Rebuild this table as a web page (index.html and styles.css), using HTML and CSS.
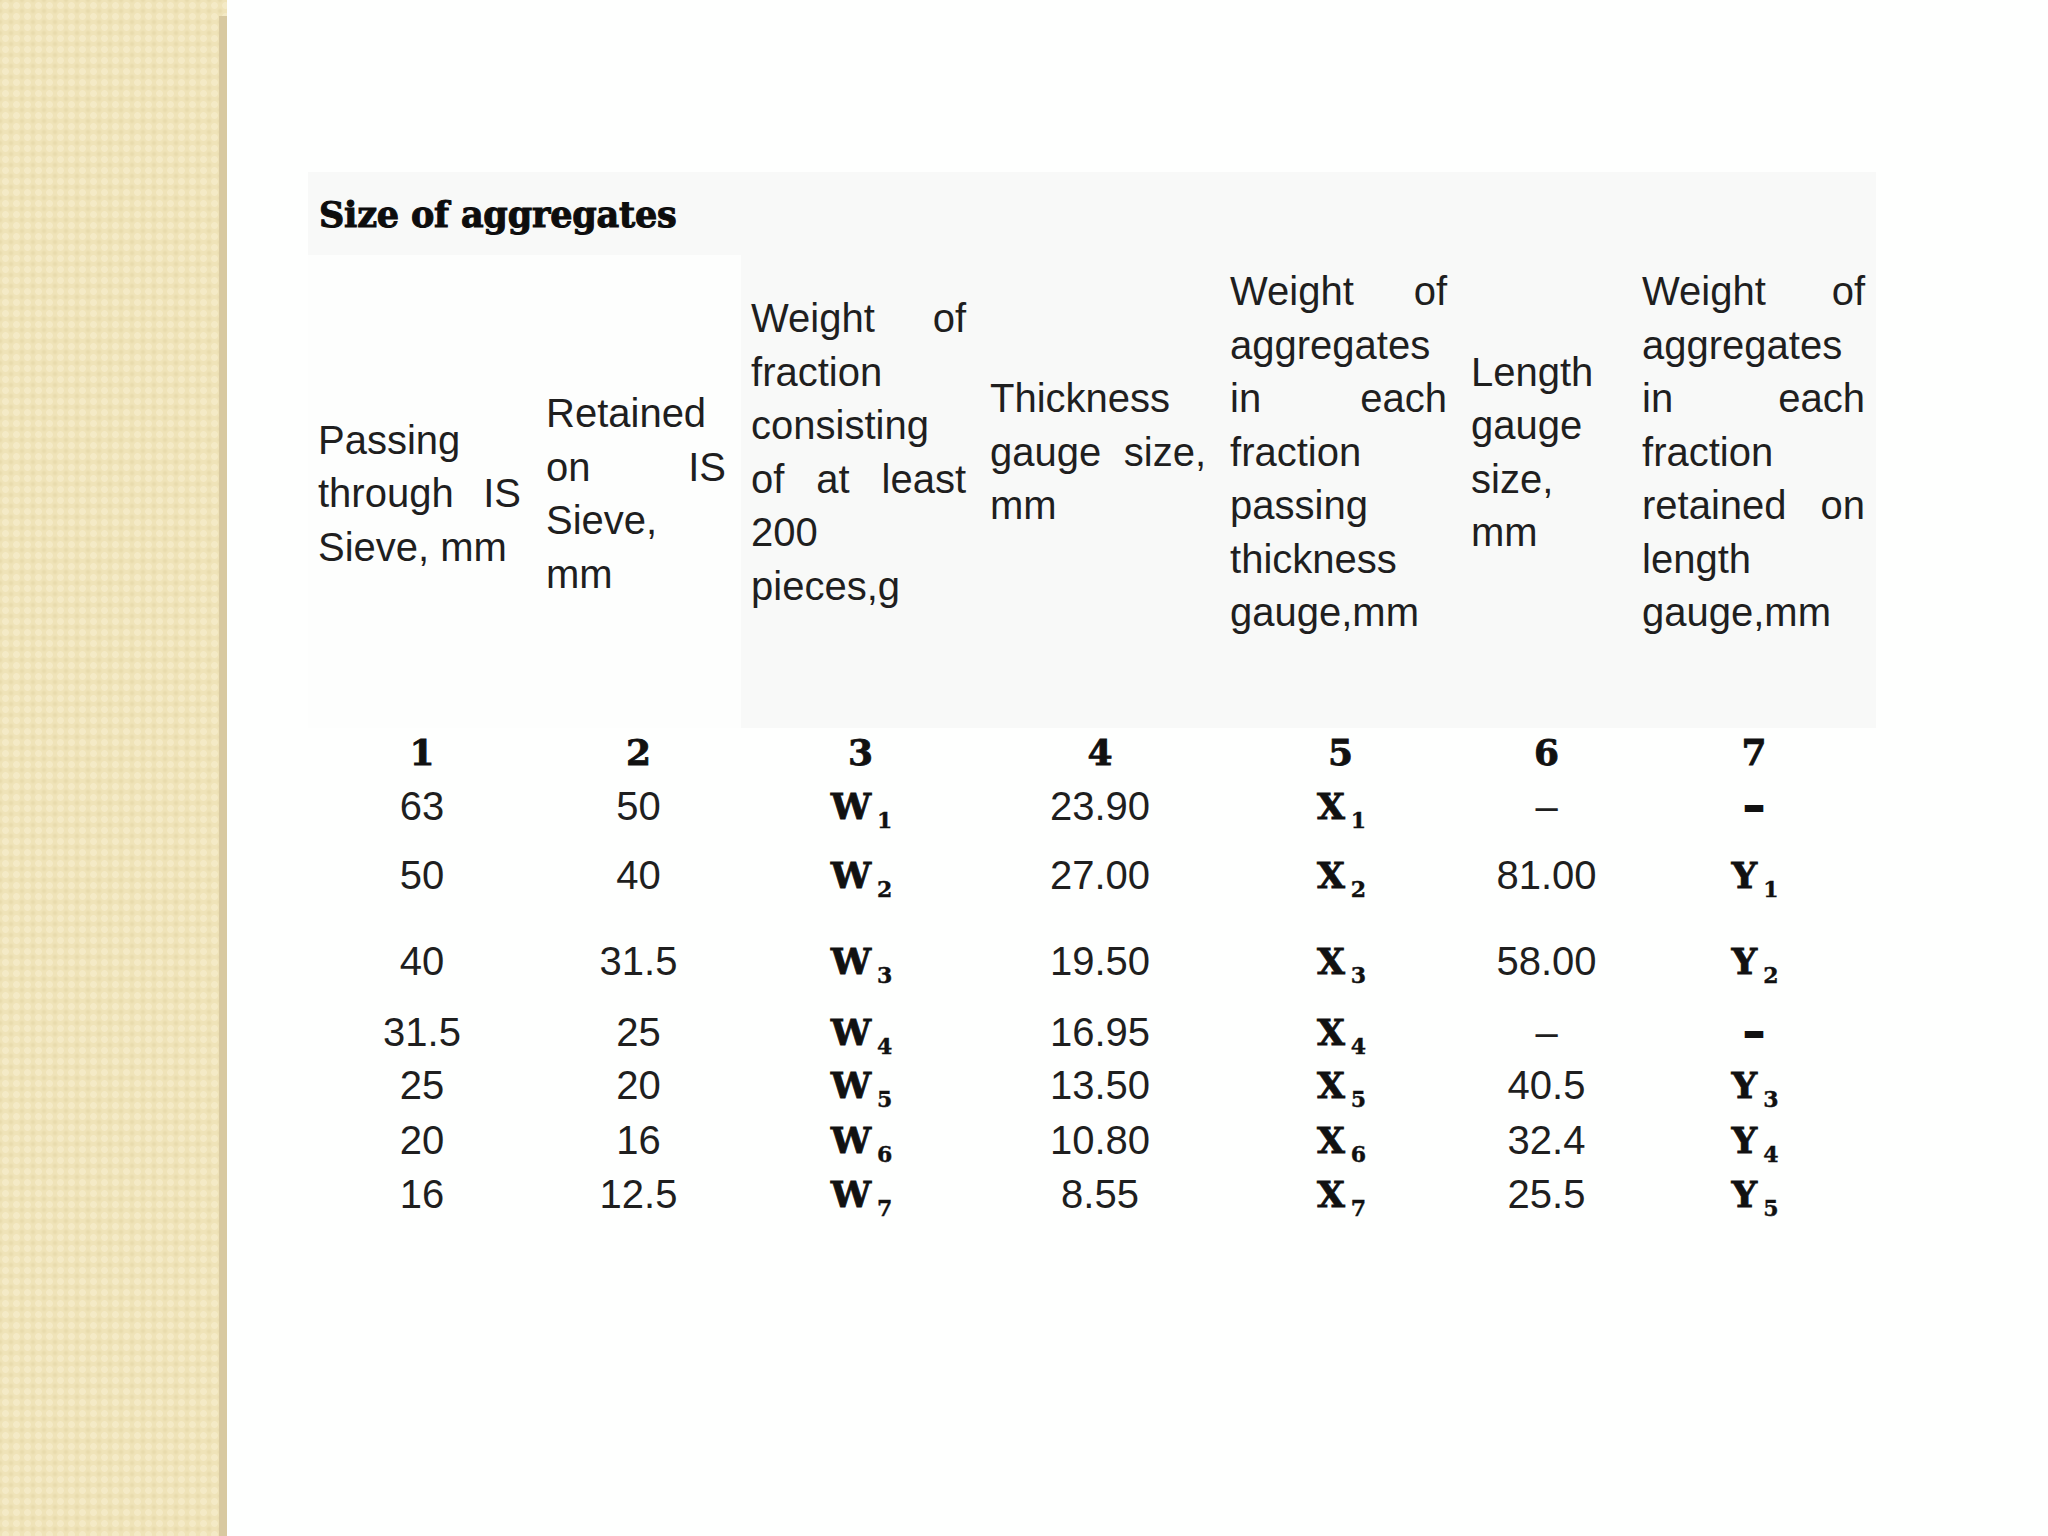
FILE: index.html
```html
<!DOCTYPE html>
<html lang="en">
<head>
<meta charset="utf-8">
<title>Size of aggregates</title>
<link rel="stylesheet" href="styles.css">
</head>
<body>
<div class="page">
  <div class="strip"><div class="edge"></div></div>
  <main class="content">
    <table class="agg">
      <colgroup>
        <col class="c1"><col class="c2"><col class="c3"><col class="c4"><col class="c5"><col class="c6"><col class="c7">
      </colgroup>
      <tr class="title-row">
        <td colspan="2" class="title">Size of aggregates</td>
        <th rowspan="2" class="hd">Weight of fraction consisting of at least 200 pieces,g</th>
        <th rowspan="2" class="hd">Thickness gauge size, mm</th>
        <th rowspan="2" class="hd">Weight of aggregates in each fraction passing thickness gauge,mm</th>
        <th rowspan="2" class="hd">Length gauge size, mm</th>
        <th rowspan="2" class="hd last">Weight of aggregates in each fraction retained on length gauge,mm</th>
      </tr>
      <tr class="head-row">
        <th class="hd plain">Passing through IS Sieve, mm</th>
        <th class="hd plain">Retained on IS Sieve, mm</th>
      </tr>
      <tr class="r1 nums">
        <td>1</td><td>2</td><td>3</td><td>4</td><td>5</td><td>6</td><td>7</td>
      </tr>
      <tr class="r2">
        <td>63</td><td>50</td><td class="sym">W<sub>1</sub></td><td>23.90</td><td class="sym">X<sub>1</sub></td><td>–</td><td class="sym dash">–</td>
      </tr>
      <tr class="r3">
        <td>50</td><td>40</td><td class="sym">W<sub>2</sub></td><td>27.00</td><td class="sym">X<sub>2</sub></td><td>81.00</td><td class="sym">Y<sub>1</sub></td>
      </tr>
      <tr class="r4">
        <td>40</td><td>31.5</td><td class="sym">W<sub>3</sub></td><td>19.50</td><td class="sym">X<sub>3</sub></td><td>58.00</td><td class="sym">Y<sub>2</sub></td>
      </tr>
      <tr class="r5">
        <td>31.5</td><td>25</td><td class="sym">W<sub>4</sub></td><td>16.95</td><td class="sym">X<sub>4</sub></td><td>–</td><td class="sym dash">–</td>
      </tr>
      <tr class="r6">
        <td>25</td><td>20</td><td class="sym">W<sub>5</sub></td><td>13.50</td><td class="sym">X<sub>5</sub></td><td>40.5</td><td class="sym">Y<sub>3</sub></td>
      </tr>
      <tr class="r7">
        <td>20</td><td>16</td><td class="sym">W<sub>6</sub></td><td>10.80</td><td class="sym">X<sub>6</sub></td><td>32.4</td><td class="sym">Y<sub>4</sub></td>
      </tr>
      <tr class="r8">
        <td>16</td><td>12.5</td><td class="sym">W<sub>7</sub></td><td>8.55</td><td class="sym">X<sub>7</sub></td><td>25.5</td><td class="sym">Y<sub>5</sub></td>
      </tr>
    </table>
  </main>
</div>
</body>
</html>
```

FILE: styles.css
```css
html, body {
  margin: 0;
  padding: 0;
  background: #fefffe;
}

body {
  font-family: "Liberation Sans", Arial, sans-serif;
  color: #1f1f1f;
}

.page {
  display: flex;
  width: 2048px;
  height: 1536px;
  overflow: hidden;
}

.strip {
  width: 227px;
  flex: none;
  display: flex;
  justify-content: flex-end;
  background-color: #efe3b8;
  background-image:
    radial-gradient(circle, #f4eac6 0 3px, rgba(244, 234, 198, 0) 3.8px),
    radial-gradient(circle, #e8dbad 0 1.8px, rgba(232, 219, 173, 0) 2.6px);
  background-size: 11px 11px, 11px 11px;
  background-position: 0 0, 5.5px 5.5px;
}

.edge {
  width: 8px;
  margin-top: 16px;
  background: #d8c9a0;
}

.content {
  flex: 1;
  padding: 172px 0 0 81px;
}

.agg {
  border-collapse: collapse;
  border-spacing: 0;
  table-layout: fixed;
  width: 1568px;
}

.c1 { width: 228px; }
.c2 { width: 205px; }
.c3 { width: 239px; }
.c4 { width: 240px; }
.c5 { width: 241px; }
.c6 { width: 171px; }
.c7 { width: 244px; }

.title-row { height: 83px; }
.head-row { height: 473px; }

.agg td {
  padding: 0;
}

.agg td.title {
  background: #f8f9f8;
  padding: 2px 0 0 11px;
  vertical-align: middle;
  font-family: "DejaVu Serif", "Liberation Serif", serif;
  font-weight: 700;
  font-size: 35px;
  color: #0d0d0d;
  letter-spacing: -0.2px;
  -webkit-text-stroke: 1px #0d0d0d;
}

.hd {
  font-weight: 400;
  font-size: 40px;
  line-height: 53.5px;
  text-align: justify;
  text-align-last: left;
  vertical-align: middle;
  padding: 5px 14px 0 10px;
  background: #f8f9f8;
  color: #1f1f1f;
}

.hd.plain {
  background: #fdfefd;
  padding-right: 15px;
}

.hd.last {
  padding-right: 11px;
}

.r1 td, .r2 td, .r3 td, .r4 td, .r5 td, .r6 td, .r7 td, .r8 td {
  text-align: center;
  vertical-align: middle;
  font-size: 40px;
  line-height: 40px;
}

.r1 { height: 48px; }
.r2 { height: 60px; }
.r3 { height: 78px; }
.r4 { height: 94px; }
.r5 { height: 48px; }
.r6 { height: 58px; }
.r7 { height: 52px; }
.r8 { height: 56px; }

.nums td,
.agg td.sym {
  font-family: "DejaVu Serif", "Liberation Serif", serif;
  font-weight: 700;
  font-size: 36px;
  color: #111;
  -webkit-text-stroke: 0.8px #111;
}

.agg td.sym {
  padding-left: 2px;
}

.sym sub {
  font-size: 22px;
  line-height: 0;
  vertical-align: -9px;
  margin-left: 6px;
  -webkit-text-stroke: 0.4px #111;
}

.agg td.dash {
  font-size: 42px;
  padding-left: 0;
  -webkit-text-stroke: 2px #111;
}
```
